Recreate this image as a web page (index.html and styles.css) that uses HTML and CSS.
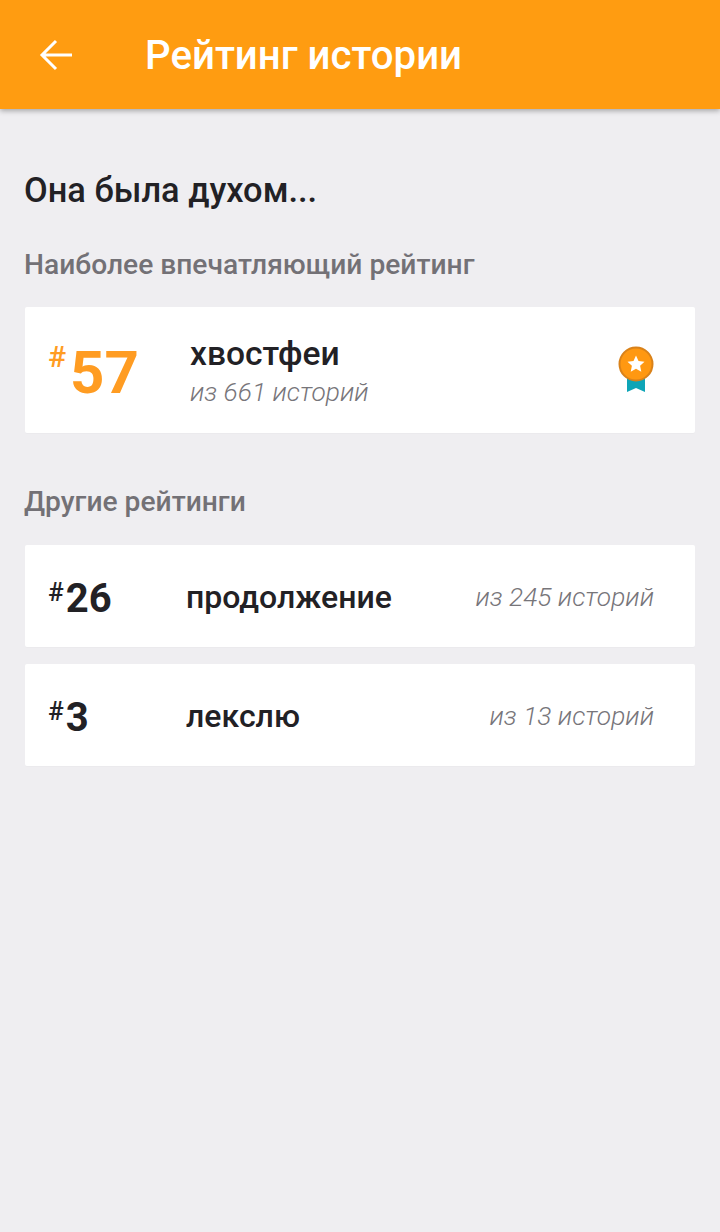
FILE: index.html
```html
<!DOCTYPE html>
<html lang="ru">
<head>
    <meta charset="UTF-8">
    <meta name="viewport" content="width=device-width, initial-scale=1.0">
    <title>Рейтинг истории</title>
    <link rel="stylesheet" href="styles.css">
</head>
<body>
    <header class="toolbar">
        <svg class="back-icon" width="34" height="32" viewBox="0 0 34 32">
            <path d="M33 16H3M17 2L3 16l14 14" fill="none" stroke="#fff" stroke-width="3"/>
        </svg>
        <h1>Рейтинг истории</h1>
    </header>
    <main>
        <h2 class="story-title">Она была духом...</h2>
        <h3 class="section-title first">Наиболее впечатляющий рейтинг</h3>
        <div class="card top-card">
            <div class="rank top-rank"><span class="hash">#</span><span class="num">57</span></div>
            <div class="top-info">
                <div class="tag">хвостфеи</div>
                <div class="count">из 661 историй</div>
            </div>
            <svg class="medal" width="36" height="46" viewBox="0 0 36 46">
                <path d="M9 28h18v18l-9-4-9 4z" fill="#0ea5b7"/>
                <circle cx="18" cy="18" r="16.5" fill="#ff9811" stroke="#d9821a" stroke-width="2"/>
                <path d="M18 9.500l2.500 5.500 6 .7-4.400 4.100 1.200 5.900-5.300-3-5.300 3 1.200-5.900-4.400-4.100 6-.7z" fill="#fff"/>
            </svg>
        </div>
        <h3 class="section-title second">Другие рейтинги</h3>
        <div class="card row-card">
            <div class="rank"><span class="hash">#</span><span class="num">26</span></div>
            <div class="tag">продолжение</div>
            <div class="count">из 245 историй</div>
        </div>
        <div class="card row-card">
            <div class="rank"><span class="hash">#</span><span class="num">3</span></div>
            <div class="tag">лекслю</div>
            <div class="count">из 13 историй</div>
        </div>
    </main>
</body>
</html>
```

FILE: styles.css
```css
html, body {
    height: 100%;
}
body {
    font-family: Roboto, sans-serif;
    background-color: #efeef1;
    color: #222125;
    margin: 0;
    padding: 0;
}
.toolbar {
    height: 109px;
    background-color: #ff9c11;
    color: white;
    display: flex;
    align-items: center;
    box-shadow: 0 2px 5px rgba(0,0,0,0.3);
}
.back-icon {
    margin-left: 39px;
    margin-right: 72px;
}
.toolbar h1 {
    margin: 2px 0 0;
    font-size: 40.2px;
    font-weight: 500;
}
main {
    padding: 0 25px;
}
.story-title {
    margin: 0 0 0 -1px;
    padding-top: 61px;
    font-size: 34.4px;
    line-height: 40px;
    font-weight: 500;
}
.section-title {
    margin: 0 0 0 -1px;
    font-size: 28.200px;
    line-height: 34px;
    font-weight: 500;
    color: #737176;
}
.section-title.first {
    margin-top: 38px;
    margin-bottom: 25px;
}
.section-title.second {
    margin-top: 52px;
    margin-bottom: 26px;
}
.card {
    background-color: white;
    border-radius: 2px;
    display: flex;
    align-items: center;
    box-shadow: 0 1px 1px rgba(0,0,0,0.02);
}
.top-card {
    height: 126px;
    padding: 0 41.500px 0 23px;
}
.row-card {
    height: 101.500px;
    padding: 0 41px 0 23px;
    margin-bottom: 17.500px;
}
.rank {
    display: flex;
    align-items: flex-start;
    width: 138px;
    padding-top: 7px;
    font-weight: 700;
    flex-shrink: 0;
}
.rank .hash {
    font-size: 26px;
    line-height: 26px;
    font-weight: 500;
    margin-top: 3px;
    margin-right: 2px;
}
.rank .num {
    font-size: 40px;
    line-height: 46px;
}
.top-rank {
    width: 142px;
    color: #ff9c22;
    padding-top: 6px;
}
.top-rank .hash {
    font-size: 30px;
    line-height: 30px;
    margin-top: -1px;
    margin-right: 4px;
}
.top-rank .num {
    font-size: 60px;
    line-height: 60px;
}
.top-info {
    flex: 1;
    padding-top: 3px;
}
.tag {
    font-size: 33.600px;
    line-height: 40px;
    font-weight: 500;
}
.row-card .tag {
    flex: 1;
    font-size: 32px;
    padding-top: 2px;
}
.count {
    font-size: 26.300px;
    line-height: 36px;
    font-weight: 300;
    font-style: italic;
    color: #77757a;
}
.row-card .count {
    padding-top: 3px;
}
.medal {
    margin-bottom: 2px;
}
```
